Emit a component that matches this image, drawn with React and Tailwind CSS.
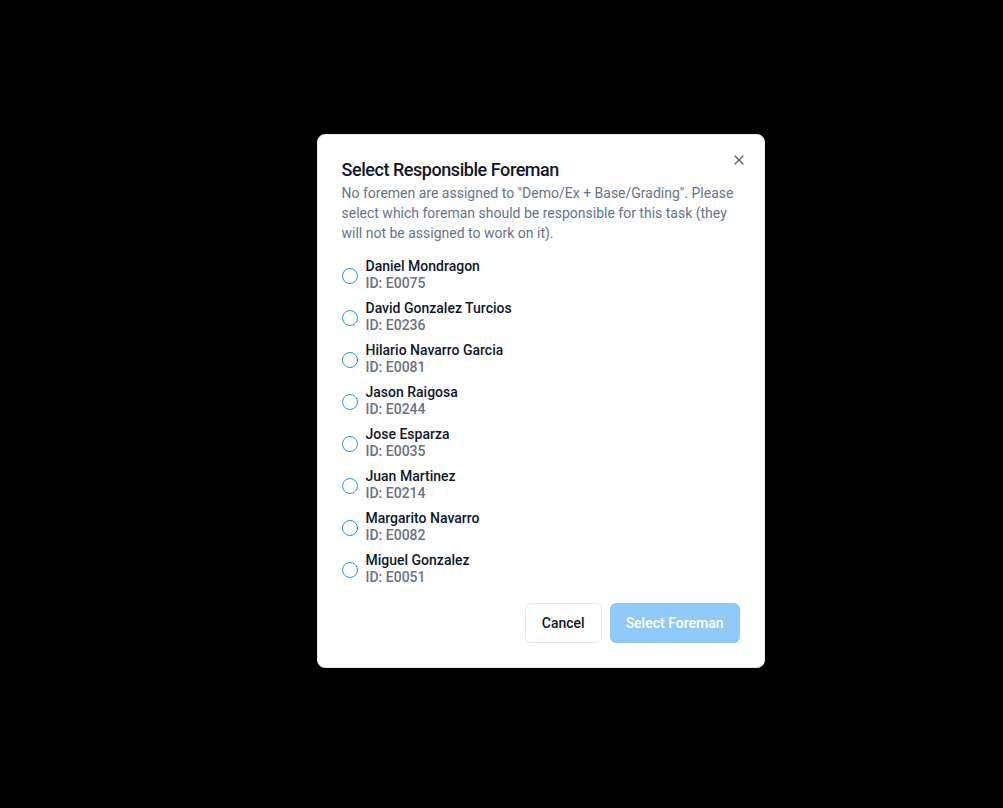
import { X } from 'lucide-react'

const foremen = [
  { name: 'Daniel Mondragon', id: 'E0075' },
  { name: 'David Gonzalez Turcios', id: 'E0236' },
  { name: 'Hilario Navarro Garcia', id: 'E0081' },
  { name: 'Jason Raigosa', id: 'E0244' },
  { name: 'Jose Esparza', id: 'E0035' },
  { name: 'Juan Martinez', id: 'E0214' },
  { name: 'Margarito Navarro', id: 'E0082' },
  { name: 'Miguel Gonzalez', id: 'E0051' },
]

export default function App() {
  return (
    <div className="min-h-[808px] w-full bg-black flex items-start justify-center pl-[78px] pt-[134px] font-['Roboto',sans-serif]">
      {/* Dialog */}
      <div className="relative w-[448px] grid gap-4 p-6 bg-white rounded-lg border border-gray-200 shadow-lg">
        <button className="absolute right-[17px] top-[17px] text-gray-700 opacity-80">
          <X className="w-4 h-4" strokeWidth={2} />
        </button>

        <div className="flex flex-col">
          <h2 className="text-lg font-medium leading-[22px] tracking-tight text-[#0f172a]">Select Responsible Foreman</h2>
          <p className="mt-[2px] text-sm leading-5 text-[#64748b]">
            No foremen are assigned to "Demo/Ex + Base/Grading". Please select which foreman should be responsible for this task (they will not be assigned to work on it).
          </p>
        </div>

        <div className="flex flex-col gap-2">
          {foremen.map(f => (
            <label key={f.id} className="flex items-center gap-2">
              <span className="w-4 h-4 rounded-full border border-[#2196f3] shrink-0" />
              <div>
                <div className="text-sm font-medium leading-none text-[#0f172a]">{f.name}</div>
                <div className="text-sm font-medium leading-5 text-[#6b7280]">ID: {f.id}</div>
              </div>
            </label>
          ))}
        </div>

        <div className="flex justify-end gap-2">
          <button className="h-10 px-4 rounded-md border border-gray-200 bg-white text-sm font-medium text-[#0f172a]">Cancel</button>
          <button className="h-10 px-4 rounded-md bg-[#90caf9] text-sm font-medium text-white">Select Foreman</button>
        </div>
      </div>
    </div>
  )
}
